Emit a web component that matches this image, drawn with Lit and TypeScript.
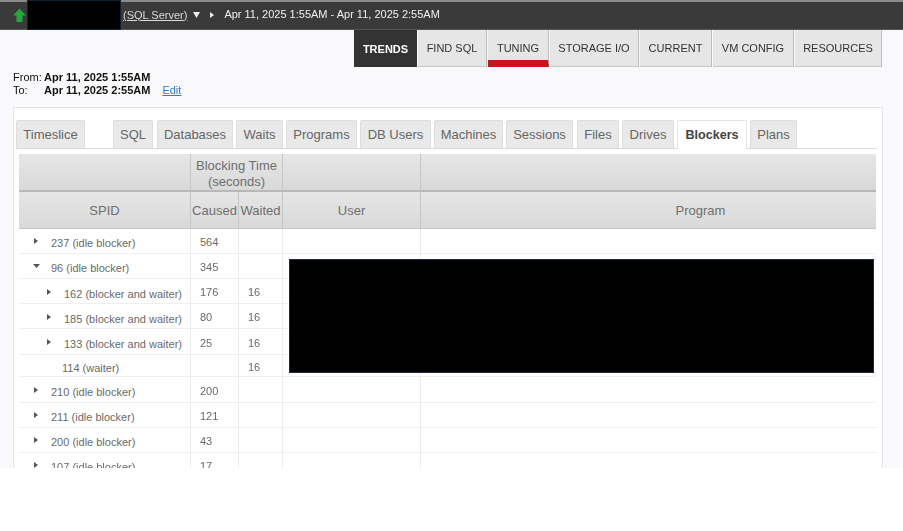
import { LitElement, html, css, nothing } from "lit";
import { customElement } from "lit/decorators.js";

const navTabs = [
  { label: "TRENDS", width: 64, kind: "dark" },
  { label: "FIND SQL", width: 70, kind: "" },
  { label: "TUNING", width: 62, kind: "red" },
  { label: "STORAGE I/O", width: 90, kind: "" },
  { label: "CURRENT", width: 73, kind: "" },
  { label: "VM CONFIG", width: 82, kind: "" },
  { label: "RESOURCES", width: 88, kind: "" },
];

const subTabs = [
  { label: "SQL", width: 40, gap: 4 },
  { label: "Databases", width: 76, gap: 3 },
  { label: "Waits", width: 47, gap: 3 },
  { label: "Programs", width: 71, gap: 3 },
  { label: "DB Users", width: 71, gap: 3 },
  { label: "Machines", width: 69, gap: 3 },
  { label: "Sessions", width: 67, gap: 4 },
  { label: "Files", width: 42, gap: 3 },
  { label: "Drives", width: 52, gap: 3 },
  { label: "Blockers", width: 70, gap: 3, active: true },
  { label: "Plans", width: 47, gap: 0 },
];

const rows = [
  { h: 25, level: 0, arrow: "right", label: "237 (idle blocker)", caused: "564", waited: "" },
  { h: 25, level: 0, arrow: "down", label: "96 (idle blocker)", caused: "345", waited: "" },
  { h: 25, level: 1, arrow: "right", label: "162 (blocker and waiter)", caused: "176", waited: "16" },
  { h: 25, level: 1, arrow: "right", label: "185 (blocker and waiter)", caused: "80", waited: "16" },
  { h: 26, level: 1, arrow: "right", label: "133 (blocker and waiter)", caused: "25", waited: "16" },
  { h: 22, level: 2, arrow: "", label: "114 (waiter)", caused: "", waited: "16" },
  { h: 26, level: 0, arrow: "right", label: "210 (idle blocker)", caused: "200", waited: "" },
  { h: 25, level: 0, arrow: "right", label: "211 (idle blocker)", caused: "121", waited: "" },
  { h: 25, level: 0, arrow: "right", label: "200 (idle blocker)", caused: "43", waited: "" },
  { h: 25, level: 0, arrow: "right", label: "107 (idle blocker)", caused: "17", waited: "" },
];

@customElement("app-root")
export class AppRoot extends LitElement {
  static styles = css`
    :host {
      display: block;
      width: 903px;
      height: 531px;
      background: #fff;
      font-family: "Liberation Sans", Arial, sans-serif;
      overflow: hidden;
    }
    .page {
      position: relative;
      height: 468px;
      background: #f9f9fb;
      overflow: hidden;
    }
    .soft { filter: blur(0.4px); }
    .topbar {
      height: 30px;
      box-sizing: border-box;
      background: #3a3a3a;
      border-top: 2px solid #8a8a8a;
      border-bottom: 1px solid #555;
      display: flex;
      align-items: center;
      color: #f0f0f0;
      font-size: 11px;
      padding: 0 0 3px 12px;
    }
    .up { width: 15px; height: 17px; flex: none; margin-top: 3px; }
    .mask {
      align-self: flex-start;
      width: 94px;
      height: 30px;
      margin: -2px 2px 0 0;
      flex: none;
      background: #000;
      box-shadow: inset 0 0 0 1px #0c2230;
    }
    .server { text-decoration: underline; color: #d9d9d9; margin-top: 1px; }
    .caret { width: 7px; height: 6px; fill: #eee; flex: none; }
    .caret.d { margin: 2px 0 0 6px; }
    .caret.r { width: 4px; height: 6px; margin: 1px 10px 0 10px; }
    .nav {
      display: flex;
      padding-left: 354px;
      height: 37px;
    }
    .nav div {
      box-sizing: border-box;
      margin-right: 1px;
      display: flex;
      align-items: center;
      justify-content: center;
      font-size: 11px;
      color: #333;
      background: #e6e6e6;
      border-right: 1px solid #bdbdbd;
      border-bottom: 1px solid #c8c8c8;
    }
    .nav .dark {
      background: #333;
      color: #fff;
      font-weight: bold;
      border: none;
    }
    .nav .red {
      border-bottom: 7px solid #c8141e;
      padding-top: 5px;
    }
    .range {
      display: grid;
      grid-template-columns: 31px auto auto 1fr;
      padding: 4px 0 0 13px;
      height: 40px;
      box-sizing: border-box;
      font-size: 11px;
      line-height: 13px;
      color: #111;
      align-content: start;
    }
    .range b { font-weight: bold; color: #111; }
    .range a { color: #3a78b8; text-decoration: underline; margin-left: 12px; }
    .panel {
      margin-left: 13px;
      width: 870px;
      box-sizing: border-box;
      height: 361px;
      background: #fff;
      border: 1px solid #e4e4e6;
      border-bottom: none;
      padding: 12px 5px 0 2px;
    }
    .tabs {
      display: flex;
      height: 29px;
      box-sizing: border-box;
      border-bottom: 1px solid #dcdcdc;
    }
    .tab {
      box-sizing: border-box;
      height: 28px;
      flex: none;
      display: flex;
      align-items: center;
      justify-content: center;
      font-size: 13px;
      color: #666;
      background: #e9e9e9;
      border: 1px solid #dedede;
      border-bottom: none;
      border-radius: 2px 2px 0 0;
    }
    .tab.time { width: 69px; margin-right: 28px; }
    .tab.active {
      height: 29px;
      padding-bottom: 1px;
      background: #fff;
      color: #444;
      font-weight: bold;
      font-size: 12.6px;
      border-color: #e4e4e4;
    }
    .tbl-wrap { padding: 5px 0 0 3px; }
    table {
      border-collapse: separate;
      border-spacing: 0;
      table-layout: fixed;
      width: 857px;
    }
    th {
      box-sizing: border-box;
      padding: 0;
      font-weight: normal;
      color: #6e6e6e;
      font-size: 13px;
      line-height: 16px;
      text-align: center;
      background: linear-gradient(#e6e6e6, #d9d9d9);
      border-right: 1px solid #c6c6c6;
    }
    th:last-child { border-right: none; }
    .h1 th { height: 38px; padding-top: 3px; border-bottom: 2px solid #b8b8b8; }
    .h2 th { height: 37px; padding-top: 1px; border-bottom: 1px solid #c6c6c6; }
    .h2 th.program { padding-left: 104px; }
    td {
      box-sizing: border-box;
      padding: 0;
      font-size: 11px;
      color: #6a6a6a;
      border-right: 1px solid #ececec;
      border-bottom: 1px solid #efefef;
      vertical-align: middle;
    }
    td:last-child { border-right: none; }
    .name { display: flex; align-items: center; padding-top: 4px; }
    .arrow { width: 4px; height: 6px; fill: #555; flex: none; margin-right: 13px; margin-top: -4px; }
    .arrow.down { width: 7px; height: 4px; margin-left: -1px; margin-right: 11px; }
    .lv0 { padding-left: 15px; }
    .lv1 { padding-left: 28px; padding-top: 5px; }
    .lv2 { padding-left: 43px; }
    .num { padding-left: 9px; }
    .num span { position: relative; top: 1px; }
    .redact {
      position: absolute;
      left: 289px;
      top: 259px;
      width: 585px;
      height: 114px;
      box-sizing: border-box;
      background: #000;
      border: 1px solid #10303f;
    }
  `;

  render() {
    return html`
      <div class="page">
        <div class="topbar soft">
          <svg class="up" viewBox="0 0 15 17">
            <path d="M7.5 1.5 14 8.5H10.5V15H4.5V8.5H1Z" fill="#22a83c" />
          </svg>
          <div class="mask"></div>
          <span class="server">(SQL Server)</span>
          <svg class="caret d" viewBox="0 0 7 6"><path d="M0 0H7L3.5 6Z" /></svg>
          <svg class="caret r" viewBox="0 0 4 6"><path d="M0 0 4 3 0 6Z" /></svg>
          <span>Apr 11, 2025 1:55AM - Apr 11, 2025 2:55AM</span>
        </div>
        <div class="nav soft">
          ${navTabs.map(
            (t) => html`<div class=${t.kind} style="width:${t.width - 1}px">${t.label}</div>`,
          )}
        </div>
        <div class="range soft">
          <span>From:</span><b>Apr 11, 2025 1:55AM</b><span></span><span></span>
          <span>To:</span><b>Apr 11, 2025 2:55AM</b><a>Edit</a><span></span>
        </div>
        <div class="panel soft">
          <div class="tabs">
            <div class="tab time">Timeslice</div>
            ${subTabs.map(
              (t) => html`<div
                class="tab ${t.active ? "active" : ""}"
                style="width:${t.width}px;margin-right:${t.gap}px"
              >
                ${t.label}
              </div>`,
            )}
          </div>
          <div class="tbl-wrap">
            <table>
              <colgroup>
                <col style="width:172px" />
                <col style="width:48px" />
                <col style="width:44px" />
                <col style="width:138px" />
                <col />
              </colgroup>
              <thead>
                <tr class="h1">
                  <th></th>
                  <th colspan="2">Blocking Time<br />(seconds)</th>
                  <th></th>
                  <th></th>
                </tr>
                <tr class="h2">
                  <th>SPID</th>
                  <th>Caused</th>
                  <th>Waited</th>
                  <th>User</th>
                  <th class="program">Program</th>
                </tr>
              </thead>
              <tbody>
                ${rows.map(
                  (r) => html`<tr style="height:${r.h}px">
                    <td>
                      <div class="name lv${r.level}">
                        ${r.arrow === "right"
                          ? html`<svg class="arrow" viewBox="0 0 4 6"><path d="M0 0 4 3 0 6Z" /></svg>`
                          : r.arrow === "down"
                            ? html`<svg class="arrow down" viewBox="0 0 7 4"><path d="M0 0H7L3.5 4Z" /></svg>`
                            : nothing}
                        <span>${r.label}</span>
                      </div>
                    </td>
                    <td class="num"><span>${r.caused}</span></td>
                    <td class="num"><span>${r.waited}</span></td>
                    <td></td>
                    <td></td>
                  </tr>`,
                )}
              </tbody>
            </table>
          </div>
        </div>
        <div class="redact"></div>
      </div>
    `;
  }
}
